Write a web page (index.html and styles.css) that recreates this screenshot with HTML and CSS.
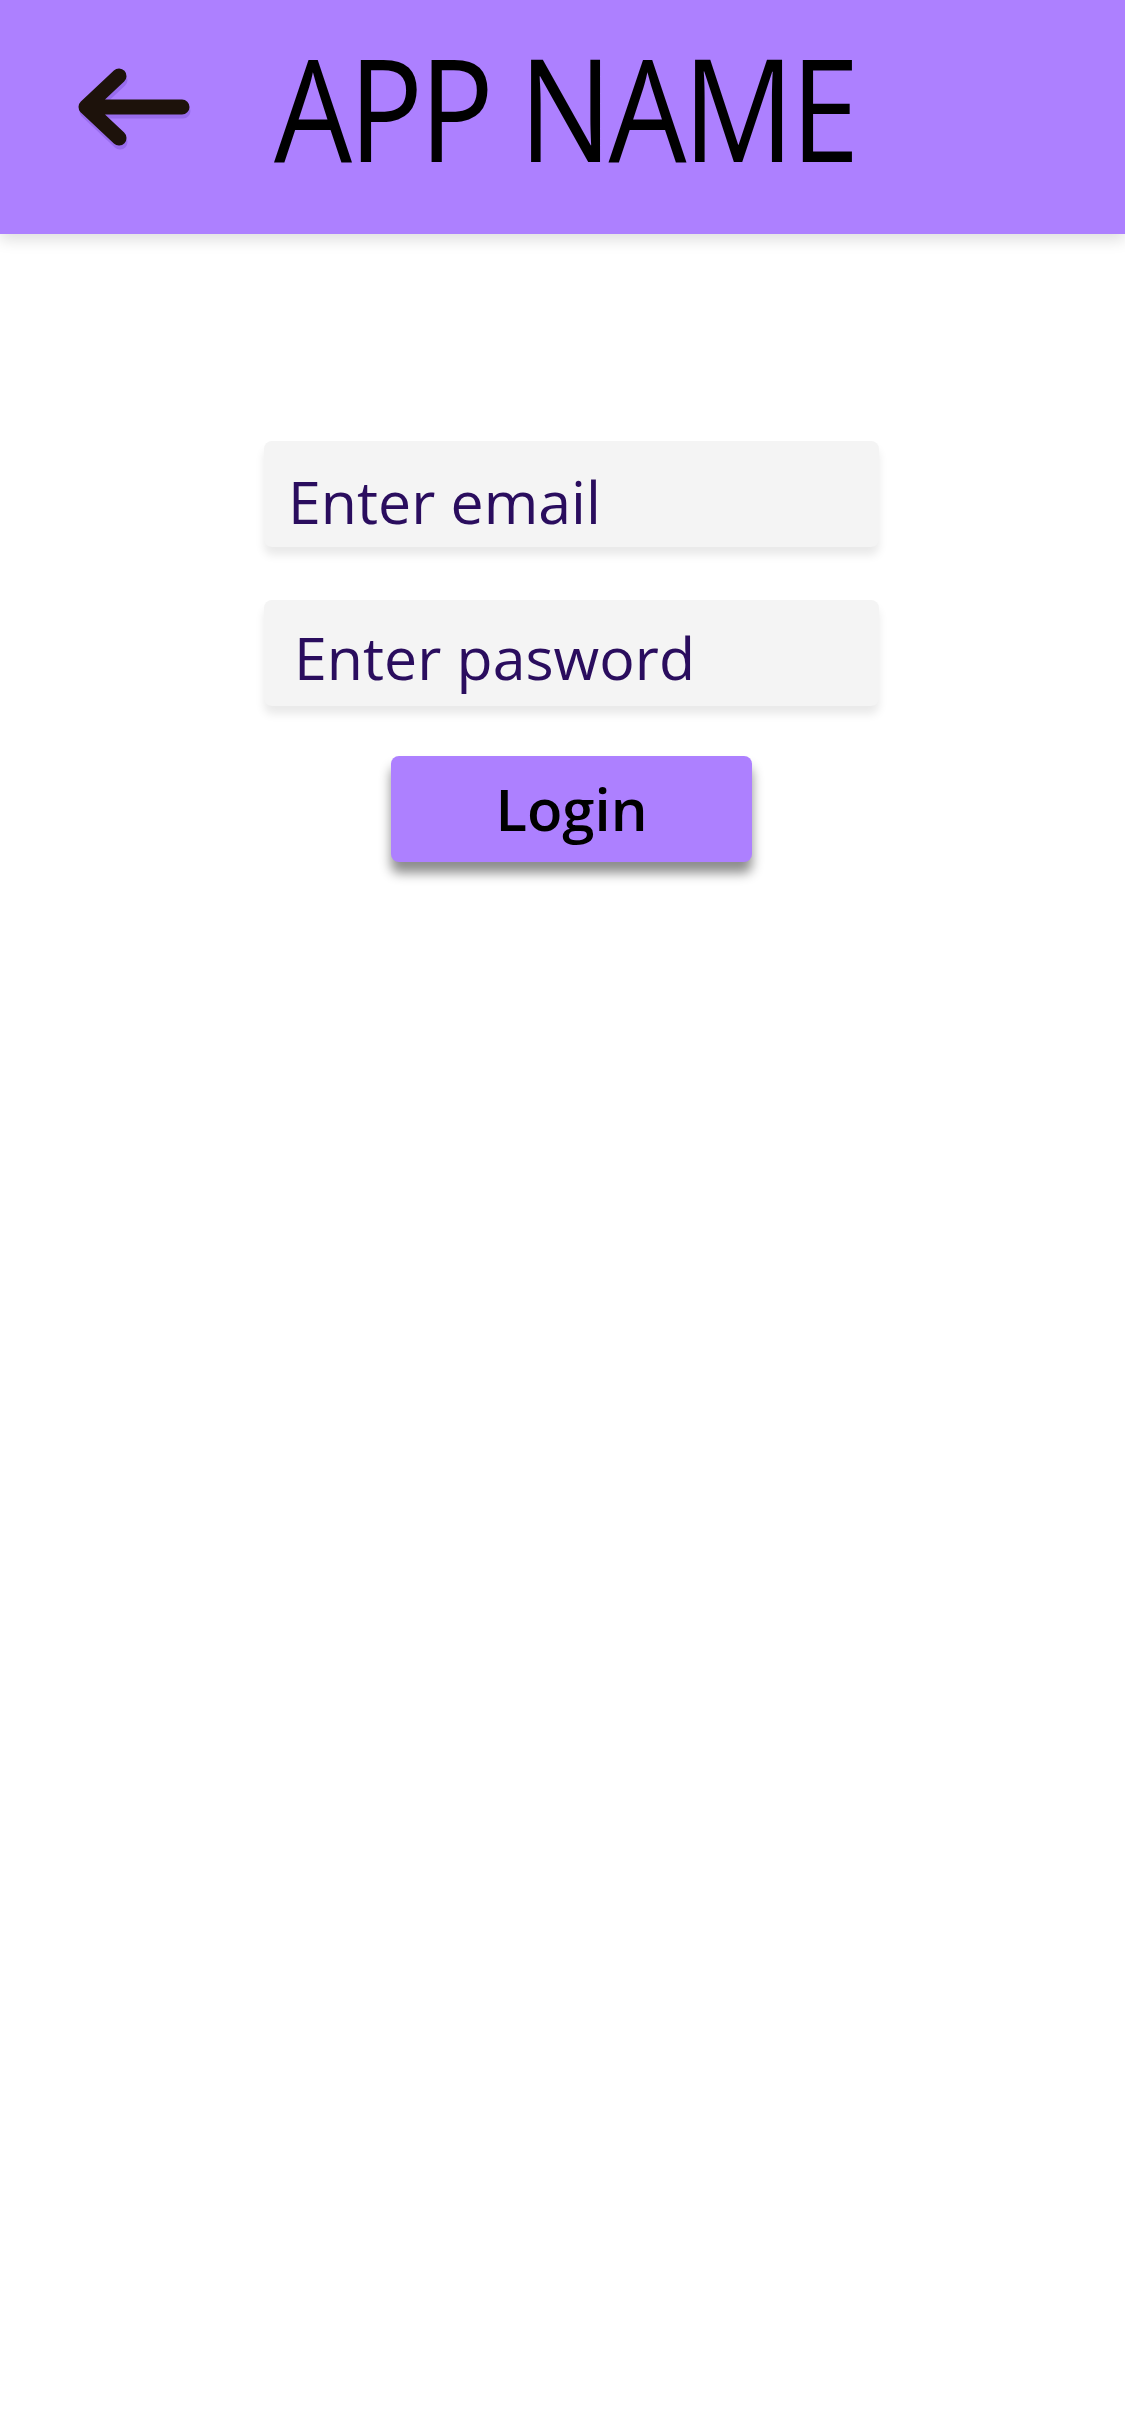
FILE: index.html
```html
<!DOCTYPE html>
<html>
<head>
<meta charset="utf-8">
<link rel="stylesheet" href="styles.css">
</head>
<body>
<header class="appbar">
  <svg class="back" width="130" height="90" viewBox="0 0 130 90">
    <g class="back-shadow" fill="none" stroke="#7f55d6" stroke-width="15" stroke-linecap="round" stroke-linejoin="round" opacity="0.45">
      <path d="M118 43 H22 M55 12 L22 43 L55 74" transform="translate(1,4)"/>
    </g>
    <g fill="none" stroke="#1d120b" stroke-width="15" stroke-linecap="round" stroke-linejoin="round">
      <path d="M118 43 H22 M55 12 L22 43 L55 74"/>
    </g>
  </svg>
  <h1 class="title">APP NAME</h1>
</header>
<main class="form">
  <div class="field field-email">Enter email</div>
  <div class="field field-pass">Enter pasword</div>
  <button class="login">Login</button>
</main>
</body>
</html>
```

FILE: styles.css
```css
html, body {
  margin: 0;
  padding: 0;
  background: #ffffff;
}
body {
  width: 1125px;
  min-height: 2436px;
  font-family: "Open Sans", "Noto Sans", sans-serif;
}
.appbar {
  height: 234px;
  background: #ad80ff;
  display: flex;
  align-items: center;
  box-shadow: 0 6px 14px rgba(0, 0, 0, 0.13);
  position: relative;
}
.back {
  margin-left: 64px;
  margin-top: -16px;
  flex: none;
}
.title {
  margin: -20px 0 0 80px;
  font-family: "Open Sans", sans-serif;
  font-weight: 400;
  font-size: 142px;
  line-height: 1;
  color: #000;
  letter-spacing: -4px;
  transform: scaleX(0.87);
  transform-origin: left center;
  white-space: nowrap;
}
.form {
  display: flex;
  flex-direction: column;
  align-items: center;
  padding-top: 207px;
  padding-left: 18px;
}
.field {
  box-sizing: border-box;
  width: 615px;
  height: 106px;
  background: #f4f4f4;
  border-radius: 8px;
  box-shadow: 0 8px 10px rgba(0, 0, 0, 0.09);
  color: #2a0d5e;
  font-size: 59px;
  line-height: 1;
  display: flex;
  align-items: center;
  padding-left: 24px;
  padding-top: 14px;
}
.field-pass {
  margin-top: 53px;
  padding-left: 30px;
  padding-top: 8px;
}
.login {
  margin-top: 50px;
  width: 361px;
  height: 106px;
  border: none;
  border-radius: 8px;
  background: #ad80ff;
  color: #000;
  font-family: "Open Sans", sans-serif;
  font-weight: 600;
  font-size: 58px;
  line-height: 1;
  box-shadow: 0 11px 12px rgba(0, 0, 0, 0.45);
  padding: 0;
}
```
